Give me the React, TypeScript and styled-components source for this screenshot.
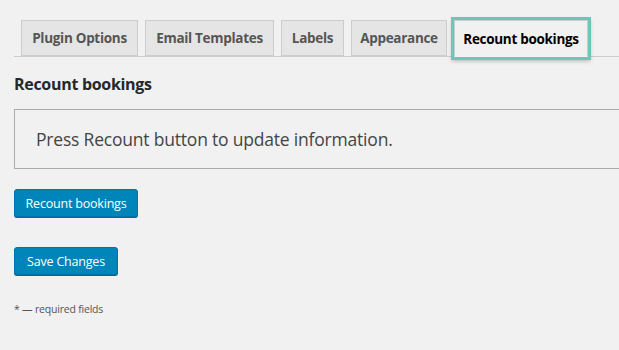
import React from "react";
import styled, { createGlobalStyle } from "styled-components";

const Global = createGlobalStyle`
  html, body { margin: 0; padding: 0; background: #f1f1f1; }
  body { font-family: "Open Sans", "Noto Sans", sans-serif; color: #444; }
`;

const Wrap = styled.div`
  padding: 20px 0 0 14px;
  width: 605px;
  overflow: hidden;
`;

const TabBar = styled.nav`
  display: flex;
  gap: 7px;
  padding-left: 7px;
  border-bottom: 1px solid #ccc;
  height: 36px;
`;

const Tab = styled.a<{ $w: number; $active?: boolean }>`
  box-sizing: border-box;
  width: ${(p) => p.$w}px;
  height: ${(p) => (p.$active ? 37 : 36)}px;
  display: flex;
  align-items: center;
  justify-content: center;
  border: 1px solid #ccc;
  border-bottom: ${(p) => (p.$active ? "1px solid #f1f1f1" : "1px solid #ccc")};
  background: ${(p) => (p.$active ? "#f1f1f1" : "#e5e5e5")};
  color: ${(p) => (p.$active ? "#000" : "#555")};
  font-size: 13.5px;
  font-weight: 700;
  letter-spacing: -0.3px;
  white-space: nowrap;
  text-decoration: none;
  ${(p) =>
    p.$active
      ? `outline: 3px solid #6cc7b7; outline-offset: 0px; box-shadow: 0 2px 4px 2px rgba(0,0,0,0.25);`
      : ""}
`;

const Heading = styled.h2`
  margin: 17px 0 0;
  font-size: 16px;
  line-height: 20px;
  font-weight: 700;
  color: #23282d;
  letter-spacing: -0.3px;
`;

const Notice = styled.div`
  box-sizing: border-box;
  margin-top: 15px;
  height: 60px;
  width: 640px;
  border: 1px solid #aaa;
  display: flex;
  align-items: center;
  padding-left: 21px;
  font-size: 17.5px;
  color: #444;
  letter-spacing: -0.2px;
`;

const Button = styled.button<{ $w: number }>`
  box-sizing: border-box;
  display: block;
  width: ${(p) => p.$w}px;
  height: 28px;
  padding: 0;
  background: #0085ba;
  border: 1px solid #0073aa;
  border-radius: 3px;
  box-shadow: 0 1px 0 #006799;
  color: #fff;
  font-family: "Open Sans", "Noto Sans", sans-serif;
  font-size: 12.5px;
  letter-spacing: -0.2px;
`;

const First = styled.div`
  margin-top: 20px;
`;

const Second = styled.div`
  margin-top: 30px;
`;

const Note = styled.p`
  margin: 27px 0 0;
  font-size: 10.5px;
  color: #555;
  letter-spacing: -0.2px;
`;

export default function App() {
  return (
    <>
      <Global />
      <Wrap>
        <TabBar>
          <Tab $w={117}>Plugin Options</Tab>
          <Tab $w={129}>Email Templates</Tab>
          <Tab $w={63}>Labels</Tab>
          <Tab $w={96}>Appearance</Tab>
          <Tab $w={134} $active>Recount bookings</Tab>
        </TabBar>
        <Heading>Recount bookings</Heading>
        <Notice>Press Recount button to update information.</Notice>
        <First>
          <Button $w={124}>Recount bookings</Button>
        </First>
        <Second>
          <Button $w={104}>Save Changes</Button>
        </Second>
        <Note>* — required fields</Note>
      </Wrap>
    </>
  );
}
